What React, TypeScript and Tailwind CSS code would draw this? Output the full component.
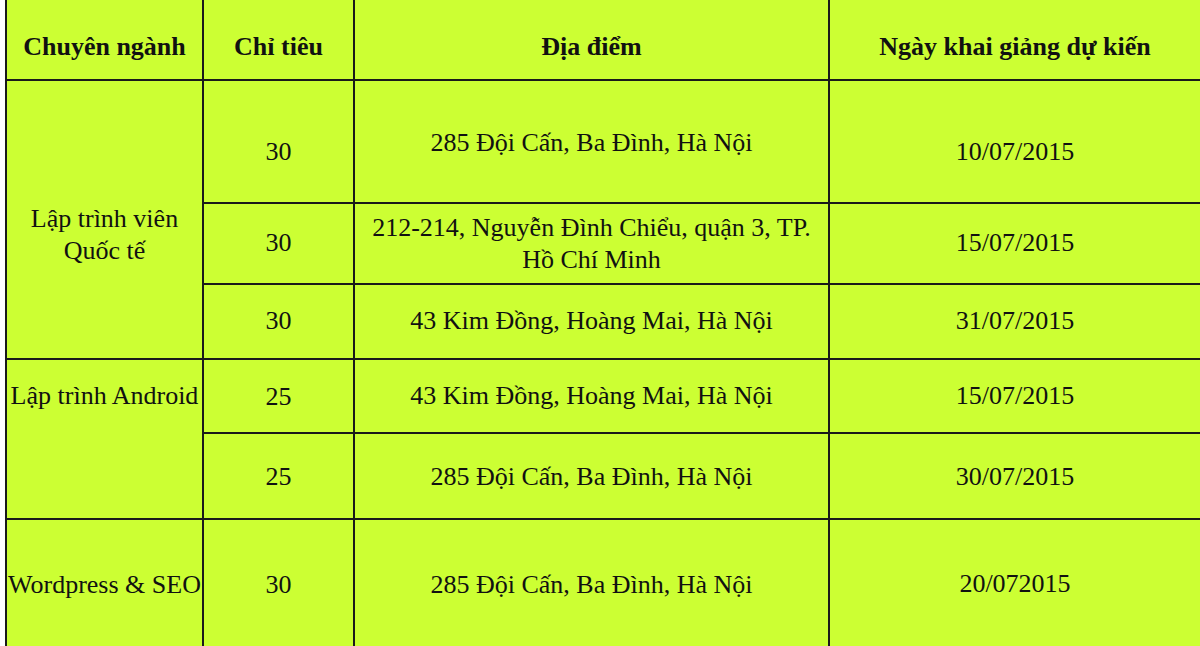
import React from "react";

const cell = "bg-[#ccff33] text-center text-[26px] leading-[32px] text-[#111]";

export default function App() {
  return (
    <div className="w-[1200px] h-[646px] overflow-hidden bg-white font-['Liberation_Serif','Times_New_Roman',serif]">
      <div className="ml-[5px] w-[1197px] grid grid-cols-[195px_149px_473px_370px] grid-rows-[79px_121px_79px_73px_72px_84px_131px] gap-[2px] bg-[#1a1a1a] px-[2px] pb-[2px]">
        {/* Header */}
        <div className={`${cell} font-bold pt-[31px]`}>Chuyên ngành</div>
        <div className={`${cell} font-bold pt-[31px]`}>Chỉ tiêu</div>
        <div className={`${cell} font-bold pt-[31px]`}>Địa điểm</div>
        <div className={`${cell} font-bold pt-[31px]`}>Ngày khai giảng dự kiến</div>

        {/* Lập trình viên Quốc tế */}
        <div className={`${cell} row-span-3 pt-[122px]`}>
          Lập trình viên
          <br />
          Quốc tế
        </div>
        <div className={`${cell} pt-[55px]`}>30</div>
        <div className={`${cell} pt-[46px]`}>285 Đội Cấn, Ba Đình, Hà Nội</div>
        <div className={`${cell} pt-[55px]`}>10/07/2015</div>

        <div className={`${cell} pt-[23px]`}>30</div>
        <div className={`${cell} pt-[8px] leading-[31px]`}>
          212-214, Nguyễn Đình Chiểu, quận 3, TP.
          <br />
          Hồ Chí Minh
        </div>
        <div className={`${cell} pt-[23px]`}>15/07/2015</div>

        <div className={`${cell} pt-[20px]`}>30</div>
        <div className={`${cell} pt-[20px]`}>43 Kim Đồng, Hoàng Mai, Hà Nội</div>
        <div className={`${cell} pt-[20px]`}>31/07/2015</div>

        {/* Lập trình Android */}
        <div className={`${cell} row-span-2 pt-[20px] whitespace-nowrap`}>Lập trình Android</div>
        <div className={`${cell} pt-[21px]`}>25</div>
        <div className={`${cell} pt-[20px]`}>43 Kim Đồng, Hoàng Mai, Hà Nội</div>
        <div className={`${cell} pt-[20px]`}>15/07/2015</div>

        <div className={`${cell} pt-[27px]`}>25</div>
        <div className={`${cell} pt-[27px]`}>285 Đội Cấn, Ba Đình, Hà Nội</div>
        <div className={`${cell} pt-[27px]`}>30/07/2015</div>

        {/* Wordpress & SEO */}
        <div className={`${cell} pt-[49px] whitespace-nowrap`}>Wordpress &amp; SEO</div>
        <div className={`${cell} pt-[49px]`}>30</div>
        <div className={`${cell} pt-[49px]`}>285 Đội Cấn, Ba Đình, Hà Nội</div>
        <div className={`${cell} pt-[48px]`}>20/072015</div>
      </div>
    </div>
  );
}
